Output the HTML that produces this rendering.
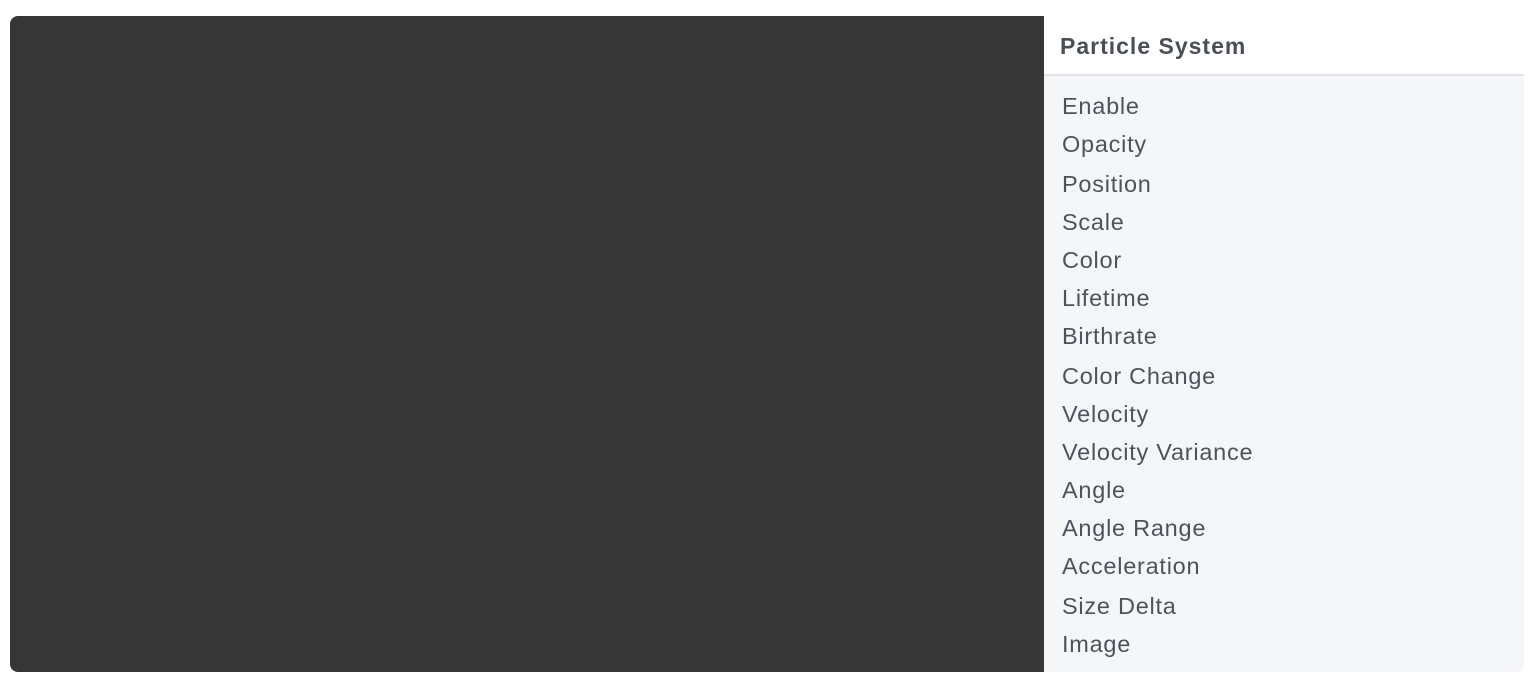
<!DOCTYPE html>
<html><head><style>
body{margin:0;width:1540px;height:686px;background:#fff;position:relative;overflow:hidden;font-family:"Liberation Sans",sans-serif;}
.dark{position:absolute;left:10px;top:16px;width:1040px;height:656px;background:#363636;border-radius:8px 0 0 8px;}
.panel{position:absolute;left:1044px;top:16px;width:480px;height:656px;background:#f5f6f8;border-radius:0 8px 8px 0;overflow:hidden;}
.hd{height:58px;background:#fff;border-bottom:2px solid #e2e4e8;color:#4a4f57;font-weight:bold;font-size:23px;letter-spacing:1px;line-height:60px;padding-left:16px;}
.it{position:absolute;left:18px;color:#4d535c;font-size:23.5px;letter-spacing:0.75px;line-height:30px;}
</style></head><body>
<div class="dark"></div>
<div class="panel">
<div class="hd">Particle System</div>
<div class="it" style="top:75px">Enable</div>
<div class="it" style="top:113px">Opacity</div>
<div class="it" style="top:153px">Position</div>
<div class="it" style="top:191px">Scale</div>
<div class="it" style="top:229px">Color</div>
<div class="it" style="top:267px">Lifetime</div>
<div class="it" style="top:305px">Birthrate</div>
<div class="it" style="top:345px">Color Change</div>
<div class="it" style="top:383px">Velocity</div>
<div class="it" style="top:421px">Velocity Variance</div>
<div class="it" style="top:459px">Angle</div>
<div class="it" style="top:497px">Angle Range</div>
<div class="it" style="top:535px">Acceleration</div>
<div class="it" style="top:575px">Size Delta</div>
<div class="it" style="top:613px">Image</div>
</div>
</body></html>
